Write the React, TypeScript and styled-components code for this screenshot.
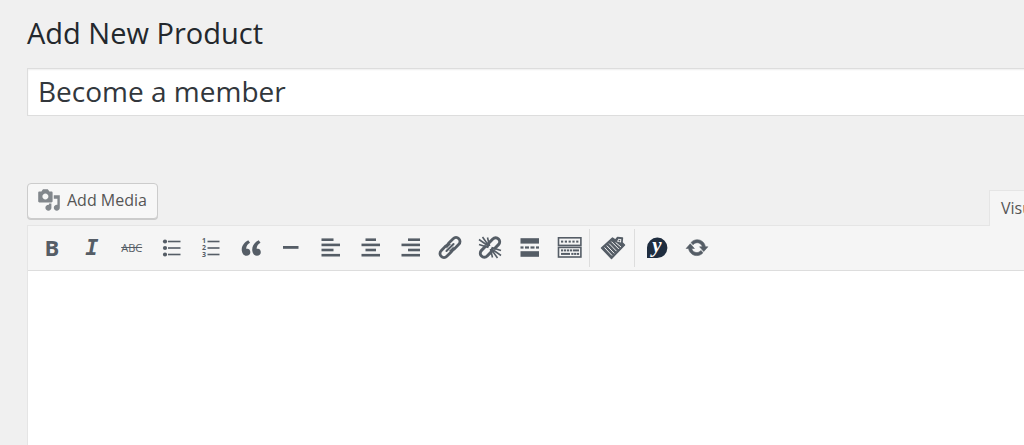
import React from "react";
import styled, { createGlobalStyle } from "styled-components";

const INK = "#555d66";

const GlobalStyle = createGlobalStyle`
  *, *::before, *::after { box-sizing: border-box; }
  body {
    margin: 0;
    background: #f0f0f0;
    color: #23282d;
    font-family: "Open Sans", sans-serif;
    overflow: hidden;
  }
`;

const Page = styled.main`
  display: flex;
  flex-direction: column;
  min-height: 100vh;
  margin-right: -36px;
  padding: 13px 0 0 27px;
`;

const Title = styled.h1`
  margin: 0 0 15px;
  font-size: 29px;
  font-weight: 400;
  line-height: 40px;
`;

const TitleInput = styled.input`
  width: 100%;
  height: 48px;
  margin-bottom: 67px;
  padding: 0 10px 2px;
  border: 1px solid #ddd;
  background: #fff;
  box-shadow: inset 0 1px 2px rgba(0, 0, 0, 0.07);
  color: #32373c;
  font-family: inherit;
  font-size: 28px;
  outline: none;
`;

const EditorTools = styled.div`
  display: flex;
  justify-content: space-between;
  align-items: flex-start;
  height: 42px;
`;

const MediaButton = styled.button`
  display: flex;
  align-items: center;
  gap: 6px;
  height: 36px;
  padding: 0 10px 2px 9px;
  border: 1px solid #ccc;
  border-radius: 4px;
  background: #f7f7f7;
  box-shadow: 0 1px 0 #ccc;
  color: #555;
  font-family: inherit;
  font-size: 16px;
  white-space: nowrap;

  svg { fill: #82878c; }
`;

const Tab = styled.button`
  align-self: flex-end;
  width: 71px;
  height: 36px;
  margin-bottom: -1px;
  padding: 0 11px 2px;
  border: 1px solid #e5e5e5;
  border-bottom: 0;
  background: #f5f5f5;
  color: #555;
  font-family: inherit;
  font-size: 16px;
  text-align: left;
  z-index: 1;
`;

const Editor = styled.section`
  display: flex;
  flex: 1;
  flex-direction: column;
  border: 1px solid #e5e5e5;
  border-bottom: 0;
`;

const Toolbar = styled.div`
  display: flex;
  align-items: center;
  height: 45px;
  padding-left: 5px;
  border-bottom: 1px solid #ddd;
  background: #f5f5f5;
`;

const Group = styled.div<{ $width?: number }>`
  display: flex;
  align-items: center;
  justify-content: ${(p) => (p.$width ? "space-between" : "center")};
  gap: ${(p) => (p.$width ? 0 : 2)}px;
  width: ${(p) => (p.$width ? `${p.$width}px` : "auto")};
  padding: ${(p) => (p.$width ? 0 : "0 3px")};
  height: 38px;

  & + & { border-left: 1px solid #ddd; }
`;

const Tool = styled.button`
  display: flex;
  align-items: center;
  justify-content: center;
  flex: none;
  width: 38px;
  height: 38px;
  padding: 0;
  border: 0;
  background: none;
  color: ${INK};
`;

const Icon = styled.svg`
  display: block;
  overflow: visible;
  fill: currentColor;
`;

const Letter = styled.span<{ $kind: "bold" | "italic" | "strike" }>`
  padding-bottom: ${(p) => (p.$kind === "bold" ? 2 : 0)}px;
  font-family: ${(p) => (p.$kind === "italic" ? '"DejaVu Sans Mono", monospace' : '"Open Sans", sans-serif')};
  font-size: ${(p) => (p.$kind === "strike" ? 11 : 22)}px;
  font-weight: ${(p) => (p.$kind === "strike" ? 400 : 700)};
  font-style: ${(p) => (p.$kind === "italic" ? "italic" : "normal")};
  text-decoration: ${(p) => (p.$kind === "strike" ? "line-through" : "none")};
  line-height: 24px;
`;

const Content = styled.textarea`
  display: block;
  flex: 1;
  width: 100%;
  padding: 12px;
  border: 0;
  background: #fff;
  outline: none;
  resize: none;
  font: inherit;
`;

type Bar = [x: number, y: number, width: number, height: number];

function Bars({ bars }: { bars: Bar[] }) {
  return (
    <>
      {bars.map(([x, y, width, height], i) => (
        <rect key={i} x={x} y={y} width={width} height={height} />
      ))}
    </>
  );
}

function Glyph({ size = 26, box = 26, children }: { size?: number; box?: number; children: React.ReactNode }) {
  return (
    <Icon width={size} height={size} viewBox={`0 0 ${box} ${box}`} aria-hidden="true">
      {children}
    </Icon>
  );
}

const alignBars = (shorts: number, width: number): Bar[] => [
  [shorts, 3.4, width, 2.6],
  [3.5, 8.6, 18.5, 2.6],
  [shorts, 13.7, width, 2.6],
  [3.5, 18.9, 18.5, 2.6],
];

const keyRow = (xs: number[], y: number): Bar[] => xs.map((x) => [x, y, 2.2, 2]);

const formatTools: { label: string; icon: React.ReactNode }[] = [
  { label: "Bold", icon: <Letter $kind="bold">B</Letter> },
  { label: "Italic", icon: <Letter $kind="italic">I</Letter> },
  { label: "Strikethrough", icon: <Letter $kind="strike">ABC</Letter> },
  {
    label: "Bulleted list",
    icon: (
      <Glyph>
        <circle cx="6" cy="6.5" r="2.1" />
        <circle cx="6" cy="13" r="2.1" />
        <circle cx="6" cy="19.5" r="2.1" />
        <Bars bars={[[9, 5.7, 12.5, 1.6], [9, 12.2, 12.5, 1.6], [9, 18.7, 12.5, 1.6]]} />
      </Glyph>
    ),
  },
  {
    label: "Numbered list",
    icon: (
      <Glyph>
        <g fontFamily="Open Sans" fontSize="7" fontWeight="700">
          <text x="4" y="8">1</text>
          <text x="4" y="15">2</text>
          <text x="4" y="22">3</text>
        </g>
        <Bars bars={[[9.5, 5.7, 12, 1.6], [9.5, 12.2, 12, 1.6], [9.5, 18.7, 12, 1.6]]} />
      </Glyph>
    ),
  },
  {
    label: "Blockquote",
    icon: (
      <Glyph box={20}>
        <path d="M9.49 13.22c0-.74-.2-1.38-.61-1.9-.62-.78-1.83-.88-2.53-.72-.29-1.65 1.11-3.75 2.92-4.65L7.88 4c-2.73 1.3-5.42 4.28-4.96 8.05C3.21 14.43 4.59 16 6.54 16c.85 0 1.56-.25 2.12-.75s.83-1.18.83-2.03zm8.05 0c0-.74-.2-1.38-.61-1.9-.63-.78-1.83-.88-2.53-.72-.29-1.65 1.11-3.75 2.92-4.65L15.93 4c-2.73 1.3-5.41 4.28-4.95 8.05.29 2.38 1.66 3.95 3.61 3.95.85 0 1.56-.25 2.12-.75s.83-1.18.83-2.03z" />
      </Glyph>
    ),
  },
  { label: "Horizontal line", icon: <Glyph><Bars bars={[[5, 11, 15.5, 2.8]]} /></Glyph> },
  { label: "Align left", icon: <Glyph><Bars bars={alignBars(3.5, 12)} /></Glyph> },
  { label: "Align center", icon: <Glyph><Bars bars={alignBars(7.5, 10.5)} /></Glyph> },
  { label: "Align right", icon: <Glyph><Bars bars={alignBars(10, 12)} /></Glyph> },
  {
    label: "Insert link",
    icon: (
      <Glyph>
        <g transform="translate(13 12.5) rotate(-45)" fill="none" stroke="currentColor" strokeWidth="2.8">
          <rect x="-12.5" y="-4" width="14.5" height="8" rx="4" />
          <rect x="-2" y="-4" width="14.5" height="8" rx="4" />
          <path d="M-6 0H6" strokeWidth="3.4" stroke="#f5f5f5" />
          <path d="M-5 0H5" strokeWidth="2" strokeLinecap="round" />
        </g>
      </Glyph>
    ),
  },
  {
    label: "Remove link",
    icon: (
      <Glyph>
        <g transform="translate(13 12.5) rotate(-45)" fill="none" stroke="currentColor" strokeWidth="3">
          <path d="M-1.5 -4H-8a4 4 0 0 0 0 8H-1.5M1.5 -4H8a4 4 0 0 1 0 8H1.5" />
        </g>
        <path
          d="M12 11.5L2 4.5M12 11L5.5 2M11.5 12.5L2 9.5M12.6 11L10.5 2.5M14 13.5L24 20.5M14 14L20.5 23M14.5 12.5L24 15.5M13.4 14L15.5 22.5"
          stroke="currentColor"
          strokeWidth="1.6"
        />
      </Glyph>
    ),
  },
  {
    label: "Insert Read More tag",
    icon: (
      <Glyph>
        <Bars bars={[[3.5, 3.2, 18.5, 5.4], [3.5, 11.4, 3, 2.2], [8, 11.4, 4, 2.2], [13.5, 11.4, 4, 2.2], [19, 11.4, 3, 2.2], [3.5, 16.2, 18.5, 5.6]]} />
      </Glyph>
    ),
  },
  {
    label: "Toolbar toggle",
    icon: (
      <Glyph>
        <g fill="none" stroke="currentColor" strokeWidth="1.6">
          <rect x="1.5" y="2.8" width="22.4" height="7.6" />
          <rect x="1.5" y="12.4" width="22.4" height="9.6" />
        </g>
        <Bars
          bars={[
            ...keyRow([4, 7.8, 11.6, 15.4, 19.2], 5.6),
            ...keyRow([4, 7, 10, 13], 14.4),
            [16, 14.4, 6, 2],
            [4, 17.9, 9, 2],
            ...keyRow([14.3, 17.1, 19.9], 17.9),
          ]}
        />
      </Glyph>
    ),
  },
];

export default function App() {
  return (
    <>
      <GlobalStyle />
      <Page>
        <Title>Add New Product</Title>
        <TitleInput aria-label="Product name" defaultValue="Become a member" />
        <EditorTools>
          <MediaButton type="button">
            <svg width="24" height="24" viewBox="0 0 20 20" aria-hidden="true">
              <path d="M13 11V4c0-.55-.45-1-1-1h-1.67L9 1H5L3.67 3H2c-.55 0-1 .45-1 1v7c0 .55.45 1 1 1h10c.55 0 1-.45 1-1zM7 4.5c1.38 0 2.5 1.12 2.5 2.5S8.38 9.5 7 9.5 4.5 8.38 4.5 7 5.62 4.5 7 4.5zM14 6h5v10.5c0 1.38-1.12 2.5-2.5 2.5S14 17.88 14 16.5s1.12-2.5 2.5-2.5c.17 0 .34.02.5.05V9h-3V6zm-4 8.05V13h2v3.5c0 1.38-1.12 2.5-2.5 2.5S7 17.88 7 16.5 8.12 14 9.5 14c.17 0 .34.02.5.05z" />
            </svg>
            Add Media
          </MediaButton>
          <Tab type="button">Visual</Tab>
        </EditorTools>
        <Editor>
          <Toolbar role="toolbar" aria-label="Formatting">
            <Group $width={556}>
              {formatTools.map((tool) => (
                <Tool key={tool.label} type="button" aria-label={tool.label}>
                  {tool.icon}
                </Tool>
              ))}
            </Group>
            <Group>
              <Tool type="button" aria-label="Insert form">
                <Glyph>
                  <path
                    d="M2.5 13L13.5 3L16.5 5L18.5 2.5L23.5 3L23 7.5L25.5 10L12.5 23.5Z"
                    stroke="currentColor"
                    strokeWidth="1.4"
                    strokeLinejoin="round"
                  />
                  <path
                    d="M5.5 12.5L13 20.5M7.8 10.6L15.2 18.4M10.1 8.6L17.5 16.2M12.4 6.6L19.8 14M16.6 7.5L22 12"
                    stroke="#f5f5f5"
                    strokeWidth="1"
                  />
                  <path d="M18 6.5L19.5 3.8L22.3 4.2L22 7.5Z" fill="#f5f5f5" />
                  <circle cx="20.4" cy="5.6" r="0.9" />
                </Glyph>
              </Tool>
            </Group>
            <Group>
              <Tool type="button" aria-label="Insert shortcode">
                <Glyph>
                  <path d="M3 23V12.5A10.2 10.2 0 1 1 13 23z" fill="#1f2d3f" />
                  <text x="13" y="17" textAnchor="middle" fill="#fff" fontFamily="Liberation Serif" fontSize="21" fontWeight="700" fontStyle="italic">
                    y
                  </text>
                </Glyph>
              </Tool>
              <Tool type="button" aria-label="Refresh">
                <Glyph box={22}>
                  <path
                    transform="translate(1 .7)"
                    stroke="currentColor"
                    strokeWidth=".5"
                    d="M10.2 3.28c3.53 0 6.43 2.61 6.92 6h2.08l-3.5 4-3.5-4h2.32c-.45-1.97-2.21-3.45-4.32-3.45-1.45 0-2.73.71-3.54 1.78L4.95 5.66C6.23 4.2 8.11 3.28 10.2 3.28zm-.4 13.44c-3.52 0-6.43-2.61-6.92-6H.8l3.5-4c1.17 1.33 2.33 2.67 3.5 4H5.48c.45 1.97 2.21 3.45 4.32 3.45 1.45 0 2.73-.71 3.54-1.78l1.71 1.95c-1.28 1.46-3.15 2.38-5.25 2.38z"
                  />
                </Glyph>
              </Tool>
            </Group>
          </Toolbar>
          <Content aria-label="Product description" />
        </Editor>
      </Page>
    </>
  );
}
